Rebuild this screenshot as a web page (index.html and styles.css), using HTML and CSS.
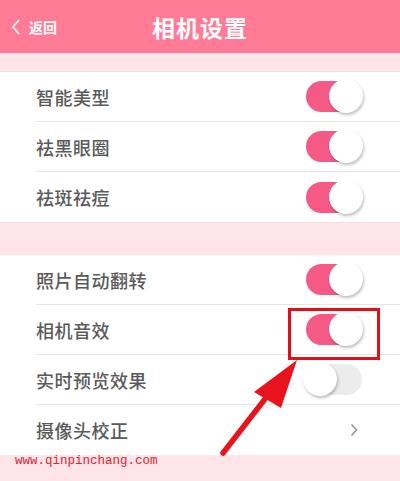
FILE: index.html
```html
<html>
  <head>
    <meta name="viewport" content="width=device-width, user-scalable=no" />
    <link rel="stylesheet" href="styles.css">
  </head>
  <body>
    <div class="page">
      <div class="header">
        <div class="back">
          <svg class="back-icon" width="10" height="18" viewBox="0 0 10 18"><polyline points="8,2 2,9 8,16" fill="none" stroke="#fff" stroke-width="1.6"/></svg>
          <span>返回</span>
        </div>
        <div class="title">相机设置</div>
        <div></div>
      </div>
      <div class="band top"></div>
      <div class="section">
        <div class="row"><span>智能美型</span><span class="switch on"></span></div>
        <div class="row"><span>祛黑眼圈</span><span class="switch on"></span></div>
        <div class="row"><span>祛斑祛痘</span><span class="switch on"></span></div>
      </div>
      <div class="band mid"></div>
      <div class="section">
        <div class="row"><span>照片自动翻转</span><span class="switch on"></span></div>
        <div class="row"><span>相机音效</span><span class="switch on"></span></div>
        <div class="row"><span>实时预览效果</span><span class="switch"></span></div>
        <div class="row"><span>摄像头校正</span>
          <svg class="chevron" width="8" height="14" viewBox="0 0 8 14"><polyline points="1.5,1.5 6.5,7 1.5,12.5" fill="none" stroke="#9a9a9a" stroke-width="1.8"/></svg>
        </div>
      </div>
      <div class="band bottom">
        <span class="mark">www.qinpinchang.com</span>
      </div>

      <!-- annotation drawn over the screenshot -->
      <div class="callout"></div>
      <svg class="arrow" width="400" height="481" viewBox="0 0 400 481">
        <line x1="223" y1="453" x2="272" y2="390" stroke="#e8131c" stroke-width="5.5" stroke-linecap="round"/>
        <polygon points="297,360 254,392 281,408" fill="#e8131c"/>
      </svg>
    </div>
  </body>
</html>
```

FILE: styles.css
```css
body {
  margin: 0;
  width: 400px;
  height: 481px;
  overflow: hidden;
  background: #fde5e9;
  font-family: "Noto Sans CJK SC", "Noto Sans", sans-serif;
}
.page {
  position: relative;
  height: 481px;
}
.header {
  height: 53px;
  background: #ff7b96;
  display: grid;
  grid-template-columns: 1fr auto 1fr;
  align-items: center;
  color: #fff;
}
.back {
  display: flex;
  align-items: center;
  gap: 8px;
  padding-left: 11px;
  font-size: 14px;
  font-weight: 700;
}
.title {
  font-size: 23px;
  font-weight: 700;
  letter-spacing: 1px;
  padding-top: 1px;
}
.band.top {
  height: 18px;
  border-bottom: 1px solid #f1e0e3;
}
.band.mid {
  height: 32px;
  border-top: 1px solid #f3dde1;
}
.band.bottom {
  height: 26px;
}
.section {
  background: #fff;
}
.row {
  height: 50px;
  margin-left: 36px;
  padding-right: 38px;
  border-bottom: 1px solid #e6e6e6;
  box-sizing: border-box;
  display: flex;
  align-items: center;
  justify-content: space-between;
  font-size: 18px;
  font-weight: 500;
  color: #5a5a5a;
  letter-spacing: 0.5px;
}
.row:last-child {
  border-bottom: none;
}
.switch {
  position: relative;
  width: 56px;
  height: 31px;
  border-radius: 16px;
  background: #ececec;
}
.switch::after {
  content: "";
  position: absolute;
  top: -2px;
  left: -3px;
  width: 34px;
  height: 34px;
  border-radius: 50%;
  background: #fff;
  box-shadow: 1px 2px 3px rgba(0, 0, 0, 0.25);
}
.switch.on {
  background: #f45a85;
}
.switch.on::after {
  left: auto;
  right: -1px;
}
.chevron {
  margin-right: 4px;
}
.mark {
  display: block;
  padding: 0 0 0 15px;
  margin-top: -1px;
  font-family: "Liberation Mono", monospace;
  font-size: 12.5px;
  color: #e8202a;
}
.callout {
  position: absolute;
  left: 288px;
  top: 308px;
  width: 86px;
  height: 46px;
  border: 3px solid #e0101a;
}
.arrow {
  position: absolute;
  left: 0;
  top: 0;
}
```
